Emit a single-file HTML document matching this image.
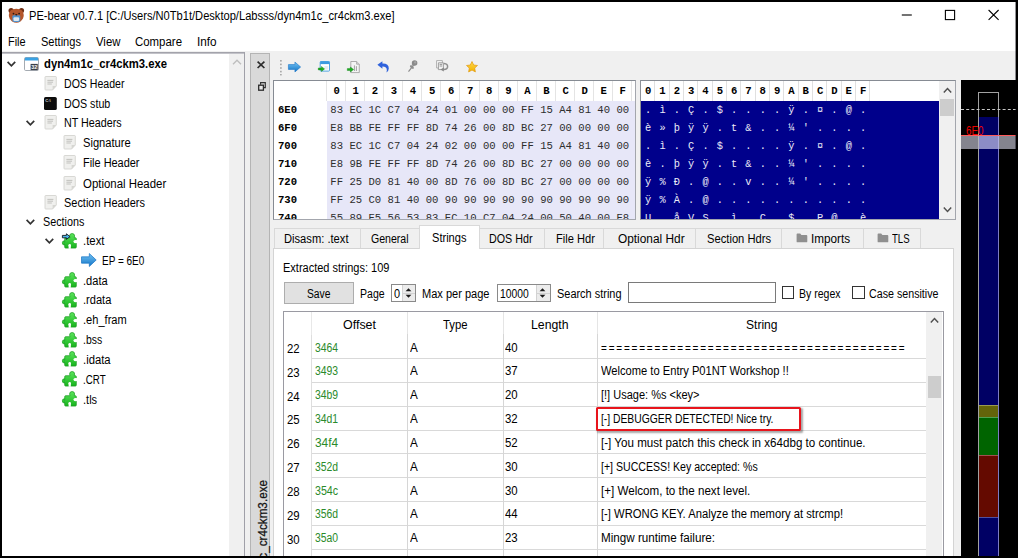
<!DOCTYPE html>
<html lang="en"><head><meta charset="utf-8"><title>PE-bear v0.7.1</title>
<style>
html,body{margin:0;padding:0}
body{width:1018px;height:558px;background:#000;overflow:hidden;position:relative;font:12px/16px "Liberation Sans", sans-serif;color:#000}
#win{position:absolute;left:2px;top:2px;width:1013.5px;height:553.6px;background:#f0f0f0;overflow:hidden}
#o{position:absolute;left:-2px;top:-2px;width:1018px;height:558px}
.b{position:absolute;box-sizing:border-box}
.t{position:absolute;white-space:pre;line-height:16px;height:16px;transform-origin:0 50%;color:#000}
.m{position:absolute;white-space:pre;font-family:"Liberation Mono", monospace;font-size:10.6px;line-height:14px;height:14px;text-align:center}
.hb{font-weight:bold;color:#000}
.hx{color:#2e2e2e}
.as{color:#ececf8;font-size:10.3px}
svg{position:absolute;overflow:visible}
</style></head><body><div id="win"><div id="o">
<div class="b" style="left:2px;top:2px;width:1014px;height:49px;background:#fff"></div>
<!-- ===== left tree dock ===== -->
<div class="b" style="left:2px;top:52px;width:243px;height:506px;background:#fff;border-top:1px solid #a3a3ab;border-right:1px solid #a0a0a8"></div>
<div class="b" style="left:2px;top:53px;width:242px;height:1px;background:#c2c2c8"></div>
<div class="b" style="left:229px;top:54px;width:15px;height:504px;background:#f0f0f0"></div>
<svg style="left:232px;top:58px" width="10" height="8" viewBox="0 0 10 8"><path d="M1 6.3 L5 2.2 L9 6.3" fill="none" stroke="#bdbdbd" stroke-width="1.3"/></svg>

<!-- ===== vertical dock title bar ===== -->
<div class="b" style="left:250.1px;top:52.6px;width:19.6px;height:506px;background:#d9d9d9;border:1px solid #b4b4b4;border-bottom:none"></div>
<svg style="left:256.6px;top:61px" width="8" height="8" viewBox="0 0 8 8"><path d="M0.6 0.6 L7.4 7.0 M7.4 0.6 L0.6 7.0" fill="none" stroke="#2b2b2b" stroke-width="1.7"/></svg>
<svg style="left:257.6px;top:81.6px" width="8" height="9" viewBox="0 0 8 9"><path d="M2.6 2.8 V0.7 H7.3 V5.6 H5.4" fill="none" stroke="#333" stroke-width="1.2"/><rect x="0.7" y="3.2" width="4.7" height="5" fill="#e8e8e8" stroke="#2b2b2b" stroke-width="1.3"/></svg>
<div class="t" style="left:254.6px;top:675.2px;width:200px;text-align:right;transform-origin:0 0;transform:rotate(-90deg) scaleX(0.975);font-size:12px;color:#111;-webkit-text-stroke:0.25px #111">dyn4m1c_cr4ckm3.exe</div>

<!-- ===== toolbar handle ===== -->
<svg style="left:279px;top:58.5px" width="4" height="17" viewBox="0 0 4 17"><g fill="#9a9a9a"><rect x="1.2" y="1" width="1.4" height="1.6"/><rect x="1.2" y="4.6" width="1.4" height="1.6"/><rect x="1.2" y="8.2" width="1.4" height="1.6"/><rect x="1.2" y="11.8" width="1.4" height="1.6"/><rect x="1.2" y="15" width="1.4" height="1.4"/></g></svg>

<!-- ===== hex view frame ===== -->
<div class="b" style="left:273px;top:80px;width:363px;height:140.4px;background:#fff;border:1px solid #a3a6ad;border-top-color:#868b93;border-left-color:#868b93"></div>
<div class="b" style="left:326.6px;top:101px;width:308.4px;height:118.4px;background:#e7e7f8"></div>
<!-- header grid lines (hex) -->
<div class="b" style="left:325.9px;top:81px;width:307.6px;height:20px;background:repeating-linear-gradient(90deg,#e4e4e4 0,#e4e4e4 1px,transparent 1px,transparent 19.07px)"></div>

<!-- ===== ascii view frame ===== -->
<div class="b" style="left:640px;top:80px;width:316px;height:140.4px;background:#fff;border:1px solid #a3a6ad;border-top-color:#868b93;border-left-color:#8e9299"></div>
<div class="b" style="left:641px;top:101px;width:298px;height:118.4px;background:#00008b"></div>
<div class="b" style="left:641.4px;top:81px;width:230px;height:20px;background:repeating-linear-gradient(90deg,transparent 0,transparent 13.33px,#e0e0e0 13.33px,#e0e0e0 14.33px)"></div>
<!-- ascii scrollbar -->
<div class="b" style="left:939px;top:81.2px;width:16.2px;height:138.2px;background:#f0f0f0"></div>
<div class="b" style="left:940.2px;top:99.2px;width:14px;height:16.8px;background:#cdcdcd"></div>
<svg style="left:942.6px;top:86.6px" width="9" height="7" viewBox="0 0 9 7"><path d="M0.8 5.4 L4.5 1.6 L8.2 5.4" fill="none" stroke="#505050" stroke-width="1.5"/></svg>
<svg style="left:942.6px;top:206.4px" width="9" height="7" viewBox="0 0 9 7"><path d="M0.8 1.6 L4.5 5.4 L8.2 1.6" fill="none" stroke="#505050" stroke-width="1.5"/></svg>

<!-- ===== tab widget ===== -->
<div class="b" style="left:273.4px;top:248px;width:680.4px;height:312px;background:#fff;border:1px solid #d4d4d4"></div>
<!-- unselected tabs -->
<div class="b" style="left:274.4px;top:227.8px;width:86.2px;height:21px;background:#f0f0f0;border:1px solid #d9d9d9;border-bottom:none"></div>
<div class="b" style="left:359.6px;top:227.8px;width:61px;height:21px;background:#f0f0f0;border:1px solid #d9d9d9;border-bottom:none"></div>
<div class="b" style="left:478.4px;top:227.8px;width:67px;height:21px;background:#f0f0f0;border:1px solid #d9d9d9;border-bottom:none"></div>
<div class="b" style="left:544.4px;top:227.8px;width:60px;height:21px;background:#f0f0f0;border:1px solid #d9d9d9;border-bottom:none"></div>
<div class="b" style="left:603.4px;top:227.8px;width:92.4px;height:21px;background:#f0f0f0;border:1px solid #d9d9d9;border-bottom:none"></div>
<div class="b" style="left:694.8px;top:227.8px;width:87.6px;height:21px;background:#f0f0f0;border:1px solid #d9d9d9;border-bottom:none"></div>
<div class="b" style="left:781.4px;top:227.8px;width:82.4px;height:21px;background:#f0f0f0;border:1px solid #d9d9d9;border-bottom:none"></div>
<div class="b" style="left:862.8px;top:227.8px;width:58.2px;height:21px;background:#f0f0f0;border:1px solid #d9d9d9;border-bottom:none"></div>
<div class="b" style="left:273.4px;top:248px;width:680.4px;height:1px;background:#d4d4d4"></div>
<!-- selected tab -->
<div class="b" style="left:419.4px;top:225.4px;width:60.4px;height:24px;background:#fff;border:1px solid #d9d9d9;border-bottom:none"></div>
<!-- folder icons in tabs -->
<svg style="left:796px;top:233.4px" width="12" height="10" viewBox="0 0 12 10"><path d="M0.6 1.4 Q0.6 0.6 1.4 0.6 H4.2 L5.4 2 H10.4 Q11.3 2 11.3 2.9 V8.4 Q11.3 9.3 10.4 9.3 H1.5 Q0.6 9.3 0.6 8.4 Z" fill="#8f8f8f"/></svg>
<svg style="left:877px;top:233.4px" width="12" height="10" viewBox="0 0 12 10"><path d="M0.6 1.4 Q0.6 0.6 1.4 0.6 H4.2 L5.4 2 H10.4 Q11.3 2 11.3 2.9 V8.4 Q11.3 9.3 10.4 9.3 H1.5 Q0.6 9.3 0.6 8.4 Z" fill="#8f8f8f"/></svg>

<!-- ===== strings controls ===== -->
<div class="b" style="left:284.4px;top:282.2px;width:69.4px;height:21.4px;background:#e1e1e1;border:1px solid #adadad"></div>
<div class="b" style="left:391.2px;top:284.2px;width:25.2px;height:17.4px;background:#fff;border:1px solid #8a8a8a"></div>
<div class="b" style="left:402.2px;top:285.2px;width:13.2px;height:15.4px;background:#ececec;border-left:1px solid #d2d2d2"></div>
<div class="b" style="left:403.2px;top:292.5px;width:12.2px;height:1px;background:#d2d2d2"></div>
<div class="b" style="left:496.8px;top:284.2px;width:54.6px;height:17.4px;background:#fff;border:1px solid #8a8a8a"></div>
<div class="b" style="left:536.2px;top:285.2px;width:14.2px;height:15.4px;background:#ececec;border-left:1px solid #d2d2d2"></div>
<div class="b" style="left:537.2px;top:292.5px;width:13.2px;height:1px;background:#d2d2d2"></div>
<div class="b" style="left:628px;top:282.4px;width:147.6px;height:20.6px;background:#fff;border:1px solid #7a7a7a"></div>
<div class="b" style="left:781.5px;top:286.1px;width:12.6px;height:12.6px;background:#fff;border:1px solid #333"></div>
<div class="b" style="left:852.4px;top:286.1px;width:12.6px;height:12.6px;background:#fff;border:1px solid #333"></div>
<!-- spin arrows -->
<svg style="left:405.4px;top:287px" width="7" height="12" viewBox="0 0 7 12"><path d="M0.6 4.2 L3.5 1.2 L6.4 4.2 Z M0.6 7.8 L3.5 10.8 L6.4 7.8 Z" fill="#1a1a1a"/></svg>
<svg style="left:539.4px;top:287px" width="7" height="12" viewBox="0 0 7 12"><path d="M0.6 4.2 L3.5 1.2 L6.4 4.2 Z M0.6 7.8 L3.5 10.8 L6.4 7.8 Z" fill="#1a1a1a"/></svg>

<!-- ===== strings table ===== -->
<div class="b" style="left:282.9px;top:310.8px;width:661px;height:250px;background:#fff;border:1.5px solid #9a9aa2"></div>
<!-- cell grid: horizontal lines -->
<div class="b" style="left:311px;top:358px;width:615px;height:1px;background:#d9d9d9"></div>
<div class="b" style="left:311px;top:382px;width:615px;height:1px;background:#d9d9d9"></div>
<div class="b" style="left:311px;top:406px;width:615px;height:1px;background:#d9d9d9"></div>
<div class="b" style="left:311px;top:430px;width:615px;height:1px;background:#d9d9d9"></div>
<div class="b" style="left:311px;top:453px;width:615px;height:1px;background:#d9d9d9"></div>
<div class="b" style="left:311px;top:477px;width:615px;height:1px;background:#d9d9d9"></div>
<div class="b" style="left:311px;top:501px;width:615px;height:1px;background:#d9d9d9"></div>
<div class="b" style="left:311px;top:525px;width:615px;height:1px;background:#d9d9d9"></div>
<div class="b" style="left:311px;top:549px;width:615px;height:1px;background:#d9d9d9"></div>
<!-- vertical lines -->
<div class="b" style="left:311px;top:335px;width:1px;height:224px;background:#dedede"></div>
<div class="b" style="left:407px;top:312.4px;width:1px;height:246px;background:linear-gradient(180deg,#e5e5e5 0,#e5e5e5 22px,#d6d6d6 22px)"></div>
<div class="b" style="left:502.6px;top:312.4px;width:1px;height:246px;background:linear-gradient(180deg,#e5e5e5 0,#e5e5e5 22px,#d6d6d6 22px)"></div>
<div class="b" style="left:597.2px;top:312.4px;width:1px;height:246px;background:linear-gradient(180deg,#e5e5e5 0,#e5e5e5 22px,#d6d6d6 22px)"></div>
<div class="b" style="left:311px;top:312.4px;width:1px;height:22.6px;background:#e8e8e8"></div>
<!-- table scrollbar -->
<div class="b" style="left:926.2px;top:312.4px;width:16.2px;height:246px;background:#f0f0f0"></div>
<div class="b" style="left:927.6px;top:376.4px;width:13.6px;height:21.6px;background:#cdcdcd"></div>
<svg style="left:930px;top:316.6px" width="9" height="7" viewBox="0 0 9 7"><path d="M0.8 5.4 L4.5 1.6 L8.2 5.4" fill="none" stroke="#505050" stroke-width="1.5"/></svg>

<!-- ===== minimap (right) ===== -->
<div class="b" style="left:961px;top:80.2px;width:58px;height:480px;background:#000"></div>
<div class="b" style="left:977.8px;top:92.2px;width:20.8px;height:470px;border:1px solid #a2a2a2;border-right-color:#7c7cc4;border-bottom:none"></div>
<div class="b" style="left:997.6px;top:92.2px;width:1px;height:25px;background:#a2a2a2"></div>
<div class="b" style="left:978.8px;top:117.2px;width:18.8px;height:288px;background:#000064"></div>
<div class="b" style="left:978.8px;top:405.2px;width:18.8px;height:12.2px;background:#64640a;border-top:1px solid #9a9a50"></div>
<div class="b" style="left:978.8px;top:417.4px;width:18.8px;height:37.8px;background:#006400;border-top:1px solid #50a050"></div>
<div class="b" style="left:978.8px;top:455.2px;width:18.8px;height:62.2px;background:#640a00;border-top:1px solid #a05050"></div>
<div class="b" style="left:978.8px;top:517.4px;width:18.8px;height:42px;background:#000064;border-top:1px solid #5050a0"></div>
<div class="b" style="left:961px;top:109.2px;width:55px;height:0;border-top:1px dashed #c8c8c8"></div>
<div class="b" style="left:961px;top:135.6px;width:55px;height:13px;background:#84848e"></div>
<div class="b" style="left:978.8px;top:135.6px;width:18.8px;height:13px;background:#8c8cc6"></div>
<div class="b" style="left:977.8px;top:135.6px;width:1px;height:13px;background:#b4b4bc"></div>
<div class="b" style="left:997.6px;top:135.6px;width:1px;height:13px;background:#b0b0e0"></div>
<div class="b" style="left:961px;top:134.8px;width:55px;height:1.2px;background:#ff5a5a"></div>
<span class="t" style="left:965.6px;top:122.6px;font-size:12px;color:#f00000;transform:scaleX(0.82)">6E0</span>
<svg width="0" height="0" style="left:0;top:0"><defs>
<linearGradient id="gb" x1="0" y1="0" x2="0" y2="1"><stop offset="0" stop-color="#74c4f4"/><stop offset="1" stop-color="#1274c6"/></linearGradient>
<linearGradient id="gg" gradientUnits="userSpaceOnUse" x1="0" y1="0" x2="0" y2="16"><stop offset="0" stop-color="#5ee65e"/><stop offset="1" stop-color="#14b01a"/></linearGradient>
<linearGradient id="gy" x1="0" y1="0" x2="0" y2="1"><stop offset="0" stop-color="#ffd84a"/><stop offset="1" stop-color="#f2b200"/></linearGradient>
<g id="chev"><path d="M0.6 0.9 L4.4 4.8 L8.2 0.9" fill="none" stroke="#333" stroke-width="1.7"/></g>
<g id="doc"><path d="M1 1.2 Q1 0.5 1.7 0.5 H11.6 Q12.3 0.5 12.3 1.2 V10 L8.6 14 H1.7 Q1 14 1 13.3 Z" fill="#f0f0ee" stroke="#cfcfcb" stroke-width=".8"/><path d="M8.6 14 V10.6 Q8.6 10 9.2 10 H12.3 Z" fill="#d6d6d2"/><path d="M3.4 4.4 H9.4 M3.4 6.2 H9 M3.4 8 H7.8" stroke="#bcbcb8" stroke-width=".9"/></g>
<g id="puz"><g fill="url(#gg)" stroke="#189a1e" stroke-width=".7"><circle cx="10.1" cy="3" r="2.5"/><circle cx="2.4" cy="9.9" r="2.1"/><rect x="2.7" y="4.7" width="11.6" height="10.4" rx="1"/></g><rect x="8.3" y="3.4" width="3.6" height="2.4" fill="#4ad84c"/><rect x="2.4" y="8.5" width="1.6" height="2.8" fill="#2fc436"/><circle cx="13.2" cy="8.6" r="1.7" fill="#fff"/><rect x="13.2" y="7.1" width="2" height="3" fill="#fff"/><circle cx="7.7" cy="12.4" r="1.3" fill="#fff"/><rect x="6.6" y="12.4" width="2.2" height="3.4" fill="#fff"/></g>
<g id="arr"><path d="M0.5 3.4 H8 V0.5 L14.6 6.2 L8 11.9 V9 H0.5 Z" fill="url(#gb)" stroke="#1f78c8" stroke-width=".7" stroke-linejoin="round"/></g>
<g id="garr"><path d="M0.3 1.6 H3.4 V0 L6.6 2.5 L3.4 5 V3.5 H0.3 Z" fill="#1fae22" stroke="#0f7f14" stroke-width=".4"/></g>
</defs></svg>

<!-- ===== title bar ===== -->
<svg style="left:7.8px;top:6.6px" width="16.6" height="16.8" viewBox="0 0 16 16">
<circle cx="3" cy="3.3" r="2.5" fill="#6e2e14"/><circle cx="13" cy="3.3" r="2.5" fill="#6e2e14"/>
<path d="M8 1.6 Q14.8 1.6 15.2 7.6 Q15.2 11.2 12 13.8 Q8 16.6 4 13.8 Q0.8 11.2 0.8 7.6 Q1.2 1.6 8 1.6 Z" fill="#b4562b"/>
<path d="M4.2 9 Q4.2 7.8 5.4 7.8 H10.6 Q11.8 7.8 11.8 9 V12.6 Q11.8 14.4 8 14.4 Q4.2 14.4 4.2 12.6 Z" fill="#4f93cf"/>
<rect x="5.3" y="9.8" width="5.4" height="3.6" rx="1" fill="#dfe7ee"/>
<circle cx="5.3" cy="6.2" r=".85" fill="#2a1a14"/><circle cx="10.7" cy="6.2" r=".85" fill="#2a1a14"/>
<ellipse cx="8" cy="7.4" rx="1.1" ry=".7" fill="#2a1a14"/>
</svg>
<svg style="left:901px;top:9px" width="100" height="12" viewBox="0 0 100 12">
<path d="M0.8 6 H10.8" stroke="#000" stroke-width="1.1" fill="none"/>
<rect x="44.4" y="1.4" width="9.2" height="9.2" fill="none" stroke="#000" stroke-width="1.1"/>
<path d="M87.6 1 L97.6 10.8 M97.6 1 L87.6 10.8" stroke="#000" stroke-width="1.1" fill="none"/>
</svg>

<!-- ===== tree: chevrons ===== -->
<svg style="left:6.6px;top:60.5px" width="9" height="6"><use href="#chev"/></svg>
<svg style="left:26.2px;top:119.9px" width="9" height="6"><use href="#chev"/></svg>
<svg style="left:25.8px;top:218.8px" width="9" height="6"><use href="#chev"/></svg>
<svg style="left:44.6px;top:237.7px" width="9" height="6"><use href="#chev"/></svg>
<!-- exe -->
<svg style="left:24px;top:56.6px" width="15" height="14" viewBox="0 0 15 14"><rect x=".5" y=".5" width="14" height="13" rx="1.2" fill="#fff" stroke="#9aa0a8" stroke-width=".9"/><path d="M.9 1.6 Q.9 .6 1.9 .6 H13.1 Q14.1 .6 14.1 1.6 V3.4 H.9 Z" fill="#3aa2e4"/><rect x="6.6" y="6.9" width="7.2" height="6.2" fill="#3a3f48"/><text x="10.2" y="12" font-family="Liberation Sans, sans-serif" font-size="5.4" font-weight="bold" fill="#fff" text-anchor="middle">32</text></svg>
<!-- doc icons -->
<svg style="left:43.8px;top:76.0px" width="14" height="15"><use href="#doc"/></svg>
<svg style="left:43.8px;top:115.3px" width="14" height="15"><use href="#doc"/></svg>
<svg style="left:62.5px;top:135.4px" width="14" height="15"><use href="#doc"/></svg>
<svg style="left:62.5px;top:155.4px" width="14" height="15"><use href="#doc"/></svg>
<svg style="left:62.5px;top:175.5px" width="14" height="15"><use href="#doc"/></svg>
<svg style="left:43.8px;top:195.3px" width="14" height="15"><use href="#doc"/></svg>
<!-- dos stub -->
<svg style="left:44.4px;top:96.7px" width="13" height="13" viewBox="0 0 13 13"><rect x="0" y="0" width="12.8" height="13" rx="1.6" fill="#0c0c0c"/><text x="1.2" y="5.2" font-family="Liberation Sans, sans-serif" font-size="4.2" font-weight="bold" fill="#d8d8d8">C:\</text></svg>
<!-- puzzles -->
<svg style="left:61.8px;top:232.5px" width="16" height="16"><use href="#puz"/><path d="M0.4 2.4 H4.4 V0.8 L8 3.6 L4.4 6.4 V4.8 H0.4 Z" fill="#49b4ea" stroke="#101820" stroke-width=".9"/></svg>
<svg style="left:61.8px;top:271.8px" width="16" height="16"><use href="#puz"/></svg>
<svg style="left:61.8px;top:291.6px" width="16" height="16"><use href="#puz"/></svg>
<svg style="left:61.8px;top:311.8px" width="16" height="16"><use href="#puz"/></svg>
<svg style="left:61.8px;top:331.6px" width="16" height="16"><use href="#puz"/></svg>
<svg style="left:61.8px;top:351.4px" width="16" height="16"><use href="#puz"/></svg>
<svg style="left:61.8px;top:371.0px" width="16" height="16"><use href="#puz"/></svg>
<svg style="left:61.8px;top:390.8px" width="16" height="16"><use href="#puz"/></svg>
<!-- EP arrow -->
<svg style="left:80.9px;top:253.2px" width="15.6" height="14" viewBox="0 0 15 12.4" preserveAspectRatio="none"><use href="#arr"/></svg>

<!-- ===== toolbar icons ===== -->
<svg style="left:287.6px;top:60.6px" width="13" height="12" viewBox="0 0 15 12.4"><use href="#arr"/></svg>
<!-- window + green arrow -->
<svg style="left:317.6px;top:61.2px" width="12" height="11" viewBox="0 0 12 11">
<rect x="2.2" y=".5" width="9.3" height="9.6" rx=".8" fill="#fff" stroke="#3d9be0" stroke-width=".9"/>
<rect x="2.2" y=".5" width="9.3" height="2.6" fill="#3d9be0"/>
<rect x="6.4" y="5" width="3.8" height="3.6" fill="#e6ecf2"/>
<g transform="translate(0,5.4)"><use href="#garr"/></g>
</svg>
<!-- file + green arrow -->
<svg style="left:346.8px;top:60.6px" width="13" height="12" viewBox="0 0 13 12">
<path d="M3.8 .5 H9.6 L12.3 3.2 V11.6 H3.8 Z" fill="#f4f4f4" stroke="#9a9a9a" stroke-width=".8"/>
<path d="M9.6 .5 V3.2 H12.3" fill="#d8d8d8" stroke="#9a9a9a" stroke-width=".7"/>
<path d="M7.4 4.4 V10 M9.4 5.2 V10" stroke="#8a8a8a" stroke-width=".8"/>
<g transform="translate(0,6)"><use href="#garr"/></g>
</svg>
<!-- undo -->
<svg style="left:376.6px;top:60.6px" width="13" height="12" viewBox="0 0 13 12">
<path d="M0.4 3.8 L5.4 0.2 V2.4 Q11.8 2.2 11.8 7.4 Q11.6 10.2 9.4 11.6 Q10.2 9.4 9.6 7.6 Q8.6 5.4 5.4 5.6 V7.8 Z" fill="#2f62dc"/>
</svg>
<!-- pin -->
<svg style="left:407.8px;top:60.2px" width="10" height="12" viewBox="0 0 10 12">
<path d="M0.5 11.6 L3.6 7.6" stroke="#8a8a8a" stroke-width="1.1" fill="none"/>
<path d="M2 5.6 Q3.4 4.6 5 6 Q6.4 7.4 5.6 8.8 Q4.2 9.2 2.8 7.8 Q1.4 6.4 2 5.6 Z" fill="#8e8e8e"/>
<path d="M3.6 5 L5.2 3.2 L7 5 L5.4 6.6 Z" fill="#9c9c9c"/>
<circle cx="6.6" cy="3" r="2.8" fill="#8a8a8a"/><circle cx="7.2" cy="2.4" r="1.1" fill="#a6a6a6"/>
</svg>
<!-- pages -->
<svg style="left:436px;top:60.2px" width="13" height="12" viewBox="0 0 13 12">
<path d="M.6 .6 H6.4 V8 H.6 Z" fill="#fafafa" stroke="#a8a8a8" stroke-width=".9"/>
<path d="M2.4 2.8 H7.4 V9.6 H2.4 Z" fill="#f2f2f2" stroke="#969696" stroke-width=".9"/>
<path d="M3.6 4.4 H6.2 M3.6 6 H6.2" stroke="#8a8a8a" stroke-width=".9"/>
<path d="M8 3.4 Q12 3.6 11.6 7.2 Q11 9.8 7.6 9.6" fill="none" stroke="#8e8e8e" stroke-width="1.5"/>
<path d="M4.4 9.6 L7.8 7.6 V11.6 Z" fill="#868686"/>
</svg>
<!-- star -->
<svg style="left:465.6px;top:61.2px" width="12" height="11.4" viewBox="0 0 12 11.4">
<path d="M6 .5 L7.7 4 L11.5 4.5 L8.7 7.1 L9.4 10.9 L6 9.1 L2.6 10.9 L3.3 7.1 L.5 4.5 L4.3 4 Z" fill="url(#gy)" stroke="#e39a10" stroke-width=".7" stroke-linejoin="round"/>
</svg>
<div class="b" style="left:0;top:0;width:1018px;height:219.2px;overflow:hidden">
<div id="hex">
<span class="m hb" style="left:327.20px;top:84px;width:19.07px">0</span><span class="m hb" style="left:346.27px;top:84px;width:19.07px">1</span><span class="m hb" style="left:365.34px;top:84px;width:19.07px">2</span><span class="m hb" style="left:384.41px;top:84px;width:19.07px">3</span><span class="m hb" style="left:403.48px;top:84px;width:19.07px">4</span><span class="m hb" style="left:422.55px;top:84px;width:19.07px">5</span><span class="m hb" style="left:441.62px;top:84px;width:19.07px">6</span><span class="m hb" style="left:460.69px;top:84px;width:19.07px">7</span><span class="m hb" style="left:479.76px;top:84px;width:19.07px">8</span><span class="m hb" style="left:498.83px;top:84px;width:19.07px">9</span><span class="m hb" style="left:517.90px;top:84px;width:19.07px">A</span><span class="m hb" style="left:536.97px;top:84px;width:19.07px">B</span><span class="m hb" style="left:556.04px;top:84px;width:19.07px">C</span><span class="m hb" style="left:575.11px;top:84px;width:19.07px">D</span><span class="m hb" style="left:594.18px;top:84px;width:19.07px">E</span><span class="m hb" style="left:613.25px;top:84px;width:19.07px">F</span>
<span class="m hb" style="left:278px;top:103.4px;text-align:left">6E0</span><span class="m hx" style="left:327.20px;top:103.4px;width:19.07px">83</span><span class="m hx" style="left:346.27px;top:103.4px;width:19.07px">EC</span><span class="m hx" style="left:365.34px;top:103.4px;width:19.07px">1C</span><span class="m hx" style="left:384.41px;top:103.4px;width:19.07px">C7</span><span class="m hx" style="left:403.48px;top:103.4px;width:19.07px">04</span><span class="m hx" style="left:422.55px;top:103.4px;width:19.07px">24</span><span class="m hx" style="left:441.62px;top:103.4px;width:19.07px">01</span><span class="m hx" style="left:460.69px;top:103.4px;width:19.07px">00</span><span class="m hx" style="left:479.76px;top:103.4px;width:19.07px">00</span><span class="m hx" style="left:498.83px;top:103.4px;width:19.07px">00</span><span class="m hx" style="left:517.90px;top:103.4px;width:19.07px">FF</span><span class="m hx" style="left:536.97px;top:103.4px;width:19.07px">15</span><span class="m hx" style="left:556.04px;top:103.4px;width:19.07px">A4</span><span class="m hx" style="left:575.11px;top:103.4px;width:19.07px">81</span><span class="m hx" style="left:594.18px;top:103.4px;width:19.07px">40</span><span class="m hx" style="left:613.25px;top:103.4px;width:19.07px">00</span>
<span class="m hb" style="left:278px;top:121.3px;text-align:left">6F0</span><span class="m hx" style="left:327.20px;top:121.3px;width:19.07px">E8</span><span class="m hx" style="left:346.27px;top:121.3px;width:19.07px">BB</span><span class="m hx" style="left:365.34px;top:121.3px;width:19.07px">FE</span><span class="m hx" style="left:384.41px;top:121.3px;width:19.07px">FF</span><span class="m hx" style="left:403.48px;top:121.3px;width:19.07px">FF</span><span class="m hx" style="left:422.55px;top:121.3px;width:19.07px">8D</span><span class="m hx" style="left:441.62px;top:121.3px;width:19.07px">74</span><span class="m hx" style="left:460.69px;top:121.3px;width:19.07px">26</span><span class="m hx" style="left:479.76px;top:121.3px;width:19.07px">00</span><span class="m hx" style="left:498.83px;top:121.3px;width:19.07px">8D</span><span class="m hx" style="left:517.90px;top:121.3px;width:19.07px">BC</span><span class="m hx" style="left:536.97px;top:121.3px;width:19.07px">27</span><span class="m hx" style="left:556.04px;top:121.3px;width:19.07px">00</span><span class="m hx" style="left:575.11px;top:121.3px;width:19.07px">00</span><span class="m hx" style="left:594.18px;top:121.3px;width:19.07px">00</span><span class="m hx" style="left:613.25px;top:121.3px;width:19.07px">00</span>
<span class="m hb" style="left:278px;top:139.1px;text-align:left">700</span><span class="m hx" style="left:327.20px;top:139.1px;width:19.07px">83</span><span class="m hx" style="left:346.27px;top:139.1px;width:19.07px">EC</span><span class="m hx" style="left:365.34px;top:139.1px;width:19.07px">1C</span><span class="m hx" style="left:384.41px;top:139.1px;width:19.07px">C7</span><span class="m hx" style="left:403.48px;top:139.1px;width:19.07px">04</span><span class="m hx" style="left:422.55px;top:139.1px;width:19.07px">24</span><span class="m hx" style="left:441.62px;top:139.1px;width:19.07px">02</span><span class="m hx" style="left:460.69px;top:139.1px;width:19.07px">00</span><span class="m hx" style="left:479.76px;top:139.1px;width:19.07px">00</span><span class="m hx" style="left:498.83px;top:139.1px;width:19.07px">00</span><span class="m hx" style="left:517.90px;top:139.1px;width:19.07px">FF</span><span class="m hx" style="left:536.97px;top:139.1px;width:19.07px">15</span><span class="m hx" style="left:556.04px;top:139.1px;width:19.07px">A4</span><span class="m hx" style="left:575.11px;top:139.1px;width:19.07px">81</span><span class="m hx" style="left:594.18px;top:139.1px;width:19.07px">40</span><span class="m hx" style="left:613.25px;top:139.1px;width:19.07px">00</span>
<span class="m hb" style="left:278px;top:157.0px;text-align:left">710</span><span class="m hx" style="left:327.20px;top:157.0px;width:19.07px">E8</span><span class="m hx" style="left:346.27px;top:157.0px;width:19.07px">9B</span><span class="m hx" style="left:365.34px;top:157.0px;width:19.07px">FE</span><span class="m hx" style="left:384.41px;top:157.0px;width:19.07px">FF</span><span class="m hx" style="left:403.48px;top:157.0px;width:19.07px">FF</span><span class="m hx" style="left:422.55px;top:157.0px;width:19.07px">8D</span><span class="m hx" style="left:441.62px;top:157.0px;width:19.07px">74</span><span class="m hx" style="left:460.69px;top:157.0px;width:19.07px">26</span><span class="m hx" style="left:479.76px;top:157.0px;width:19.07px">00</span><span class="m hx" style="left:498.83px;top:157.0px;width:19.07px">8D</span><span class="m hx" style="left:517.90px;top:157.0px;width:19.07px">BC</span><span class="m hx" style="left:536.97px;top:157.0px;width:19.07px">27</span><span class="m hx" style="left:556.04px;top:157.0px;width:19.07px">00</span><span class="m hx" style="left:575.11px;top:157.0px;width:19.07px">00</span><span class="m hx" style="left:594.18px;top:157.0px;width:19.07px">00</span><span class="m hx" style="left:613.25px;top:157.0px;width:19.07px">00</span>
<span class="m hb" style="left:278px;top:174.9px;text-align:left">720</span><span class="m hx" style="left:327.20px;top:174.9px;width:19.07px">FF</span><span class="m hx" style="left:346.27px;top:174.9px;width:19.07px">25</span><span class="m hx" style="left:365.34px;top:174.9px;width:19.07px">D0</span><span class="m hx" style="left:384.41px;top:174.9px;width:19.07px">81</span><span class="m hx" style="left:403.48px;top:174.9px;width:19.07px">40</span><span class="m hx" style="left:422.55px;top:174.9px;width:19.07px">00</span><span class="m hx" style="left:441.62px;top:174.9px;width:19.07px">8D</span><span class="m hx" style="left:460.69px;top:174.9px;width:19.07px">76</span><span class="m hx" style="left:479.76px;top:174.9px;width:19.07px">00</span><span class="m hx" style="left:498.83px;top:174.9px;width:19.07px">8D</span><span class="m hx" style="left:517.90px;top:174.9px;width:19.07px">BC</span><span class="m hx" style="left:536.97px;top:174.9px;width:19.07px">27</span><span class="m hx" style="left:556.04px;top:174.9px;width:19.07px">00</span><span class="m hx" style="left:575.11px;top:174.9px;width:19.07px">00</span><span class="m hx" style="left:594.18px;top:174.9px;width:19.07px">00</span><span class="m hx" style="left:613.25px;top:174.9px;width:19.07px">00</span>
<span class="m hb" style="left:278px;top:192.8px;text-align:left">730</span><span class="m hx" style="left:327.20px;top:192.8px;width:19.07px">FF</span><span class="m hx" style="left:346.27px;top:192.8px;width:19.07px">25</span><span class="m hx" style="left:365.34px;top:192.8px;width:19.07px">C0</span><span class="m hx" style="left:384.41px;top:192.8px;width:19.07px">81</span><span class="m hx" style="left:403.48px;top:192.8px;width:19.07px">40</span><span class="m hx" style="left:422.55px;top:192.8px;width:19.07px">00</span><span class="m hx" style="left:441.62px;top:192.8px;width:19.07px">90</span><span class="m hx" style="left:460.69px;top:192.8px;width:19.07px">90</span><span class="m hx" style="left:479.76px;top:192.8px;width:19.07px">90</span><span class="m hx" style="left:498.83px;top:192.8px;width:19.07px">90</span><span class="m hx" style="left:517.90px;top:192.8px;width:19.07px">90</span><span class="m hx" style="left:536.97px;top:192.8px;width:19.07px">90</span><span class="m hx" style="left:556.04px;top:192.8px;width:19.07px">90</span><span class="m hx" style="left:575.11px;top:192.8px;width:19.07px">90</span><span class="m hx" style="left:594.18px;top:192.8px;width:19.07px">90</span><span class="m hx" style="left:613.25px;top:192.8px;width:19.07px">90</span>
<span class="m hb" style="left:278px;top:210.6px;text-align:left">740</span><span class="m hx" style="left:327.20px;top:210.6px;width:19.07px">55</span><span class="m hx" style="left:346.27px;top:210.6px;width:19.07px">89</span><span class="m hx" style="left:365.34px;top:210.6px;width:19.07px">E5</span><span class="m hx" style="left:384.41px;top:210.6px;width:19.07px">56</span><span class="m hx" style="left:403.48px;top:210.6px;width:19.07px">53</span><span class="m hx" style="left:422.55px;top:210.6px;width:19.07px">83</span><span class="m hx" style="left:441.62px;top:210.6px;width:19.07px">EC</span><span class="m hx" style="left:460.69px;top:210.6px;width:19.07px">10</span><span class="m hx" style="left:479.76px;top:210.6px;width:19.07px">C7</span><span class="m hx" style="left:498.83px;top:210.6px;width:19.07px">04</span><span class="m hx" style="left:517.90px;top:210.6px;width:19.07px">24</span><span class="m hx" style="left:536.97px;top:210.6px;width:19.07px">00</span><span class="m hx" style="left:556.04px;top:210.6px;width:19.07px">50</span><span class="m hx" style="left:575.11px;top:210.6px;width:19.07px">40</span><span class="m hx" style="left:594.18px;top:210.6px;width:19.07px">00</span><span class="m hx" style="left:613.25px;top:210.6px;width:19.07px">E8</span>
</div>
<div id="ascii">
<span class="m hb" style="left:641.00px;top:84px;width:14.33px">0</span><span class="m hb" style="left:655.33px;top:84px;width:14.33px">1</span><span class="m hb" style="left:669.66px;top:84px;width:14.33px">2</span><span class="m hb" style="left:683.99px;top:84px;width:14.33px">3</span><span class="m hb" style="left:698.32px;top:84px;width:14.33px">4</span><span class="m hb" style="left:712.65px;top:84px;width:14.33px">5</span><span class="m hb" style="left:726.98px;top:84px;width:14.33px">6</span><span class="m hb" style="left:741.31px;top:84px;width:14.33px">7</span><span class="m hb" style="left:755.64px;top:84px;width:14.33px">8</span><span class="m hb" style="left:769.97px;top:84px;width:14.33px">9</span><span class="m hb" style="left:784.30px;top:84px;width:14.33px">A</span><span class="m hb" style="left:798.63px;top:84px;width:14.33px">B</span><span class="m hb" style="left:812.96px;top:84px;width:14.33px">C</span><span class="m hb" style="left:827.29px;top:84px;width:14.33px">D</span><span class="m hb" style="left:841.62px;top:84px;width:14.33px">E</span><span class="m hb" style="left:855.95px;top:84px;width:14.33px">F</span>
<span class="m as" style="left:641.00px;top:103.4px;width:14.33px">.</span><span class="m as" style="left:655.33px;top:103.4px;width:14.33px">ì</span><span class="m as" style="left:669.66px;top:103.4px;width:14.33px">.</span><span class="m as" style="left:683.99px;top:103.4px;width:14.33px">Ç</span><span class="m as" style="left:698.32px;top:103.4px;width:14.33px">.</span><span class="m as" style="left:712.65px;top:103.4px;width:14.33px">$</span><span class="m as" style="left:726.98px;top:103.4px;width:14.33px">.</span><span class="m as" style="left:741.31px;top:103.4px;width:14.33px">.</span><span class="m as" style="left:755.64px;top:103.4px;width:14.33px">.</span><span class="m as" style="left:769.97px;top:103.4px;width:14.33px">.</span><span class="m as" style="left:784.30px;top:103.4px;width:14.33px">ÿ</span><span class="m as" style="left:798.63px;top:103.4px;width:14.33px">.</span><span class="m as" style="left:812.96px;top:103.4px;width:14.33px">¤</span><span class="m as" style="left:827.29px;top:103.4px;width:14.33px">.</span><span class="m as" style="left:841.62px;top:103.4px;width:14.33px">@</span><span class="m as" style="left:855.95px;top:103.4px;width:14.33px">.</span>
<span class="m as" style="left:641.00px;top:121.3px;width:14.33px">è</span><span class="m as" style="left:655.33px;top:121.3px;width:14.33px">»</span><span class="m as" style="left:669.66px;top:121.3px;width:14.33px">þ</span><span class="m as" style="left:683.99px;top:121.3px;width:14.33px">ÿ</span><span class="m as" style="left:698.32px;top:121.3px;width:14.33px">ÿ</span><span class="m as" style="left:712.65px;top:121.3px;width:14.33px">.</span><span class="m as" style="left:726.98px;top:121.3px;width:14.33px">t</span><span class="m as" style="left:741.31px;top:121.3px;width:14.33px">&amp;</span><span class="m as" style="left:755.64px;top:121.3px;width:14.33px">.</span><span class="m as" style="left:769.97px;top:121.3px;width:14.33px">.</span><span class="m as" style="left:784.30px;top:121.3px;width:14.33px">¼</span><span class="m as" style="left:798.63px;top:121.3px;width:14.33px">&#x27;</span><span class="m as" style="left:812.96px;top:121.3px;width:14.33px">.</span><span class="m as" style="left:827.29px;top:121.3px;width:14.33px">.</span><span class="m as" style="left:841.62px;top:121.3px;width:14.33px">.</span><span class="m as" style="left:855.95px;top:121.3px;width:14.33px">.</span>
<span class="m as" style="left:641.00px;top:139.1px;width:14.33px">.</span><span class="m as" style="left:655.33px;top:139.1px;width:14.33px">ì</span><span class="m as" style="left:669.66px;top:139.1px;width:14.33px">.</span><span class="m as" style="left:683.99px;top:139.1px;width:14.33px">Ç</span><span class="m as" style="left:698.32px;top:139.1px;width:14.33px">.</span><span class="m as" style="left:712.65px;top:139.1px;width:14.33px">$</span><span class="m as" style="left:726.98px;top:139.1px;width:14.33px">.</span><span class="m as" style="left:741.31px;top:139.1px;width:14.33px">.</span><span class="m as" style="left:755.64px;top:139.1px;width:14.33px">.</span><span class="m as" style="left:769.97px;top:139.1px;width:14.33px">.</span><span class="m as" style="left:784.30px;top:139.1px;width:14.33px">ÿ</span><span class="m as" style="left:798.63px;top:139.1px;width:14.33px">.</span><span class="m as" style="left:812.96px;top:139.1px;width:14.33px">¤</span><span class="m as" style="left:827.29px;top:139.1px;width:14.33px">.</span><span class="m as" style="left:841.62px;top:139.1px;width:14.33px">@</span><span class="m as" style="left:855.95px;top:139.1px;width:14.33px">.</span>
<span class="m as" style="left:641.00px;top:157.0px;width:14.33px">è</span><span class="m as" style="left:655.33px;top:157.0px;width:14.33px">.</span><span class="m as" style="left:669.66px;top:157.0px;width:14.33px">þ</span><span class="m as" style="left:683.99px;top:157.0px;width:14.33px">ÿ</span><span class="m as" style="left:698.32px;top:157.0px;width:14.33px">ÿ</span><span class="m as" style="left:712.65px;top:157.0px;width:14.33px">.</span><span class="m as" style="left:726.98px;top:157.0px;width:14.33px">t</span><span class="m as" style="left:741.31px;top:157.0px;width:14.33px">&amp;</span><span class="m as" style="left:755.64px;top:157.0px;width:14.33px">.</span><span class="m as" style="left:769.97px;top:157.0px;width:14.33px">.</span><span class="m as" style="left:784.30px;top:157.0px;width:14.33px">¼</span><span class="m as" style="left:798.63px;top:157.0px;width:14.33px">&#x27;</span><span class="m as" style="left:812.96px;top:157.0px;width:14.33px">.</span><span class="m as" style="left:827.29px;top:157.0px;width:14.33px">.</span><span class="m as" style="left:841.62px;top:157.0px;width:14.33px">.</span><span class="m as" style="left:855.95px;top:157.0px;width:14.33px">.</span>
<span class="m as" style="left:641.00px;top:174.9px;width:14.33px">ÿ</span><span class="m as" style="left:655.33px;top:174.9px;width:14.33px">%</span><span class="m as" style="left:669.66px;top:174.9px;width:14.33px">Ð</span><span class="m as" style="left:683.99px;top:174.9px;width:14.33px">.</span><span class="m as" style="left:698.32px;top:174.9px;width:14.33px">@</span><span class="m as" style="left:712.65px;top:174.9px;width:14.33px">.</span><span class="m as" style="left:726.98px;top:174.9px;width:14.33px">.</span><span class="m as" style="left:741.31px;top:174.9px;width:14.33px">v</span><span class="m as" style="left:755.64px;top:174.9px;width:14.33px">.</span><span class="m as" style="left:769.97px;top:174.9px;width:14.33px">.</span><span class="m as" style="left:784.30px;top:174.9px;width:14.33px">¼</span><span class="m as" style="left:798.63px;top:174.9px;width:14.33px">&#x27;</span><span class="m as" style="left:812.96px;top:174.9px;width:14.33px">.</span><span class="m as" style="left:827.29px;top:174.9px;width:14.33px">.</span><span class="m as" style="left:841.62px;top:174.9px;width:14.33px">.</span><span class="m as" style="left:855.95px;top:174.9px;width:14.33px">.</span>
<span class="m as" style="left:641.00px;top:192.8px;width:14.33px">ÿ</span><span class="m as" style="left:655.33px;top:192.8px;width:14.33px">%</span><span class="m as" style="left:669.66px;top:192.8px;width:14.33px">À</span><span class="m as" style="left:683.99px;top:192.8px;width:14.33px">.</span><span class="m as" style="left:698.32px;top:192.8px;width:14.33px">@</span><span class="m as" style="left:712.65px;top:192.8px;width:14.33px">.</span><span class="m as" style="left:726.98px;top:192.8px;width:14.33px">.</span><span class="m as" style="left:741.31px;top:192.8px;width:14.33px">.</span><span class="m as" style="left:755.64px;top:192.8px;width:14.33px">.</span><span class="m as" style="left:769.97px;top:192.8px;width:14.33px">.</span><span class="m as" style="left:784.30px;top:192.8px;width:14.33px">.</span><span class="m as" style="left:798.63px;top:192.8px;width:14.33px">.</span><span class="m as" style="left:812.96px;top:192.8px;width:14.33px">.</span><span class="m as" style="left:827.29px;top:192.8px;width:14.33px">.</span><span class="m as" style="left:841.62px;top:192.8px;width:14.33px">.</span><span class="m as" style="left:855.95px;top:192.8px;width:14.33px">.</span>
<span class="m as" style="left:641.00px;top:210.6px;width:14.33px">U</span><span class="m as" style="left:655.33px;top:210.6px;width:14.33px">.</span><span class="m as" style="left:669.66px;top:210.6px;width:14.33px">å</span><span class="m as" style="left:683.99px;top:210.6px;width:14.33px">V</span><span class="m as" style="left:698.32px;top:210.6px;width:14.33px">S</span><span class="m as" style="left:712.65px;top:210.6px;width:14.33px">.</span><span class="m as" style="left:726.98px;top:210.6px;width:14.33px">ì</span><span class="m as" style="left:741.31px;top:210.6px;width:14.33px">.</span><span class="m as" style="left:755.64px;top:210.6px;width:14.33px">Ç</span><span class="m as" style="left:769.97px;top:210.6px;width:14.33px">.</span><span class="m as" style="left:784.30px;top:210.6px;width:14.33px">$</span><span class="m as" style="left:798.63px;top:210.6px;width:14.33px">.</span><span class="m as" style="left:812.96px;top:210.6px;width:14.33px">P</span><span class="m as" style="left:827.29px;top:210.6px;width:14.33px">@</span><span class="m as" style="left:841.62px;top:210.6px;width:14.33px">.</span><span class="m as" style="left:855.95px;top:210.6px;width:14.33px">è</span>
</div>
</div>
<!-- red annotation box on row 25 -->
<div class="b" style="left:595.6px;top:406.8px;width:205.4px;height:23.8px;border:2px solid #e8141c;border-radius:1.5px;box-shadow:1.5px 1.5px 2px rgba(0,0,0,0.35)"></div>
<!-- right-edge soft border --><div class="b" style="left:1015px;top:0;width:1px;height:558px;background:rgba(0,0,8,0.42)"></div>
<span class="t" id="t0" style="left:28.71px;top:8.20px;transform:scaleX(0.9259);">PE-bear v0.7.1 [C:/Users/N0Tb1t/Desktop/Labsss/dyn4m1c_cr4ckm3.exe]</span>
<span class="t" id="t1" style="left:8.12px;top:34.20px;transform:scaleX(0.9099);">File</span>
<span class="t" id="t2" style="left:40.71px;top:34.20px;transform:scaleX(0.9202);">Settings</span>
<span class="t" id="t3" style="left:95.89px;top:34.20px;transform:scaleX(0.9459);">View</span>
<span class="t" id="t4" style="left:134.79px;top:34.20px;transform:scaleX(0.9522);">Compare</span>
<span class="t" id="t5" style="left:197.07px;top:34.20px;transform:scaleX(0.9792);">Info</span>
<span class="t" id="t6" style="left:44.49px;top:55.94px;transform:scaleX(0.9406);font-weight:bold">dyn4m1c_cr4ckm3.exe</span>
<span class="t" id="t7" style="left:64.14px;top:76.04px;transform:scaleX(0.8806);">DOS Header</span>
<span class="t" id="t8" style="left:64.13px;top:96.04px;transform:scaleX(0.8898);">DOS stub</span>
<span class="t" id="t9" style="left:64.13px;top:115.34px;transform:scaleX(0.8932);">NT Headers</span>
<span class="t" id="t10" style="left:82.70px;top:135.44px;transform:scaleX(0.9285);">Signature</span>
<span class="t" id="t11" style="left:82.72px;top:155.44px;transform:scaleX(0.9108);">File Header</span>
<span class="t" id="t12" style="left:82.69px;top:175.54px;transform:scaleX(0.9520);">Optional Header</span>
<span class="t" id="t13" style="left:64.12px;top:195.34px;transform:scaleX(0.9119);">Section Headers</span>
<span class="t" id="t14" style="left:42.93px;top:214.24px;transform:scaleX(0.8994);">Sections</span>
<span class="t" id="t15" style="left:82.59px;top:233.14px;transform:scaleX(0.9477);">.text</span>
<span class="t" id="t16" style="left:101.88px;top:252.64px;transform:scaleX(0.8322);">EP = 6E0</span>
<span class="t" id="t17" style="left:82.61px;top:272.54px;transform:scaleX(0.9250);">.data</span>
<span class="t" id="t18" style="left:82.61px;top:292.34px;transform:scaleX(0.9222);">.rdata</span>
<span class="t" id="t19" style="left:82.61px;top:312.44px;transform:scaleX(0.9227);">.eh_fram</span>
<span class="t" id="t20" style="left:82.65px;top:332.34px;transform:scaleX(0.8676);">.bss</span>
<span class="t" id="t21" style="left:82.59px;top:352.14px;transform:scaleX(0.9401);">.idata</span>
<span class="t" id="t22" style="left:82.69px;top:371.74px;transform:scaleX(0.8135);">.CRT</span>
<span class="t" id="t23" style="left:82.61px;top:391.54px;transform:scaleX(0.9189);">.tls</span>
<span class="t" id="t24" style="left:283.70px;top:231.40px;transform:scaleX(0.9299);">Disasm: .text</span>
<span class="t" id="t25" style="left:371.44px;top:231.40px;transform:scaleX(0.8805);">General</span>
<span class="t" id="t26" style="left:431.91px;top:230.20px;transform:scaleX(0.9235);">Strings</span>
<span class="t" id="t27" style="left:489.33px;top:231.40px;transform:scaleX(0.8935);">DOS Hdr</span>
<span class="t" id="t28" style="left:555.70px;top:231.40px;transform:scaleX(0.9282);">File Hdr</span>
<span class="t" id="t29" style="left:617.66px;top:231.40px;transform:scaleX(0.9885);">Optional Hdr</span>
<span class="t" id="t30" style="left:706.70px;top:231.40px;transform:scaleX(0.9330);">Section Hdrs</span>
<span class="t" id="t31" style="left:810.97px;top:231.40px;transform:scaleX(0.9771);">Imports</span>
<span class="t" id="t32" style="left:892.20px;top:231.40px;transform:scaleX(0.7994);">TLS</span>
<span class="t" id="t33" style="left:283.01px;top:259.60px;transform:scaleX(0.9167);">Extracted strings: 109</span>
<span class="t" id="t34" style="left:307.16px;top:285.60px;transform:scaleX(0.8589);">Save</span>
<span class="t" id="t35" style="left:360.44px;top:285.60px;transform:scaleX(0.8776);">Page</span>
<span class="t" id="t36" style="left:393.92px;top:285.60px;transform:scaleX(0.9121);">0</span>
<span class="t" id="t37" style="left:422.31px;top:285.60px;transform:scaleX(0.9197);">Max per page</span>
<span class="t" id="t38" style="left:499.66px;top:285.60px;transform:scaleX(0.8599);">10000</span>
<span class="t" id="t39" style="left:557.32px;top:285.60px;transform:scaleX(0.9123);">Search string</span>
<span class="t" id="t40" style="left:799.04px;top:285.60px;transform:scaleX(0.8784);">By regex</span>
<span class="t" id="t41" style="left:869.33px;top:285.60px;transform:scaleX(0.8905);">Case sensitive</span>
<span class="t" id="t42" style="left:342.72px;top:316.60px;transform:scaleX(1.0378);">Offset</span>
<span class="t" id="t43" style="left:442.79px;top:316.60px;transform:scaleX(0.9417);">Type</span>
<span class="t" id="t44" style="left:530.73px;top:316.60px;transform:scaleX(1.0217);">Length</span>
<span class="t" id="t45" style="left:745.75px;top:316.60px;transform:scaleX(1.0045);">String</span>
<span class="t" id="t46" style="left:287.29px;top:340.90px;transform:scaleX(0.9506);">22</span>
<span class="t" id="t47" style="left:314.75px;top:339.50px;transform:scaleX(0.8651);color:#2a8a2a">3464</span>
<span class="t" id="t48" style="left:409.57px;top:339.50px;transform:scaleX(0.9731);">A</span>
<span class="t" id="t49" style="left:505.49px;top:339.50px;transform:scaleX(0.9506);">40</span>
<span class="t" id="t50" style="left:601.18px;top:339.50px;transform:scaleX(0.8289);letter-spacing:2.2px">========================================</span>
<span class="t" id="t51" style="left:287.29px;top:364.75px;transform:scaleX(0.9506);">23</span>
<span class="t" id="t52" style="left:314.75px;top:363.35px;transform:scaleX(0.8651);color:#2a8a2a">3493</span>
<span class="t" id="t53" style="left:409.57px;top:363.35px;transform:scaleX(0.9731);">A</span>
<span class="t" id="t54" style="left:505.49px;top:363.35px;transform:scaleX(0.9506);">37</span>
<span class="t" id="t55" style="left:601.10px;top:363.35px;transform:scaleX(0.9293);">Welcome to Entry P01NT Workshop !!</span>
<span class="t" id="t56" style="left:287.29px;top:388.60px;transform:scaleX(0.9506);">24</span>
<span class="t" id="t57" style="left:314.75px;top:387.20px;transform:scaleX(0.8651);color:#2a8a2a">34b9</span>
<span class="t" id="t58" style="left:409.57px;top:387.20px;transform:scaleX(0.9731);">A</span>
<span class="t" id="t59" style="left:505.49px;top:387.20px;transform:scaleX(0.9506);">20</span>
<span class="t" id="t60" style="left:601.11px;top:387.20px;transform:scaleX(0.9172);">[!] Usage: %s &lt;key&gt;</span>
<span class="t" id="t61" style="left:287.29px;top:412.45px;transform:scaleX(0.9506);">25</span>
<span class="t" id="t62" style="left:314.75px;top:411.05px;transform:scaleX(0.8651);color:#2a8a2a">34d1</span>
<span class="t" id="t63" style="left:409.57px;top:411.05px;transform:scaleX(0.9731);">A</span>
<span class="t" id="t64" style="left:505.49px;top:411.05px;transform:scaleX(0.9506);">32</span>
<span class="t" id="t65" style="left:601.16px;top:411.05px;transform:scaleX(0.8600);">[-] DEBUGGER DETECTED! Nice try.</span>
<span class="t" id="t66" style="left:287.29px;top:436.30px;transform:scaleX(0.9506);">26</span>
<span class="t" id="t67" style="left:314.66px;top:434.90px;transform:scaleX(0.9889);color:#2a8a2a">34f4</span>
<span class="t" id="t68" style="left:409.57px;top:434.90px;transform:scaleX(0.9731);">A</span>
<span class="t" id="t69" style="left:505.49px;top:434.90px;transform:scaleX(0.9506);">52</span>
<span class="t" id="t70" style="left:601.07px;top:434.90px;transform:scaleX(0.9674);">[-] You must patch this check in x64dbg to continue.</span>
<span class="t" id="t71" style="left:287.29px;top:460.15px;transform:scaleX(0.9506);">27</span>
<span class="t" id="t72" style="left:314.75px;top:458.75px;transform:scaleX(0.8651);color:#2a8a2a">352d</span>
<span class="t" id="t73" style="left:409.57px;top:458.75px;transform:scaleX(0.9731);">A</span>
<span class="t" id="t74" style="left:505.49px;top:458.75px;transform:scaleX(0.9506);">30</span>
<span class="t" id="t75" style="left:601.14px;top:458.75px;transform:scaleX(0.8816);">[+] SUCCESS! Key accepted: %s</span>
<span class="t" id="t76" style="left:287.29px;top:484.00px;transform:scaleX(0.9506);">28</span>
<span class="t" id="t77" style="left:314.73px;top:482.60px;transform:scaleX(0.8874);color:#2a8a2a">354c</span>
<span class="t" id="t78" style="left:409.57px;top:482.60px;transform:scaleX(0.9731);">A</span>
<span class="t" id="t79" style="left:505.49px;top:482.60px;transform:scaleX(0.9506);">30</span>
<span class="t" id="t80" style="left:601.07px;top:482.60px;transform:scaleX(0.9677);">[+] Welcom, to the next level.</span>
<span class="t" id="t81" style="left:287.29px;top:507.85px;transform:scaleX(0.9506);">29</span>
<span class="t" id="t82" style="left:314.75px;top:506.45px;transform:scaleX(0.8651);color:#2a8a2a">356d</span>
<span class="t" id="t83" style="left:409.57px;top:506.45px;transform:scaleX(0.9731);">A</span>
<span class="t" id="t84" style="left:505.49px;top:506.45px;transform:scaleX(0.9506);">44</span>
<span class="t" id="t85" style="left:601.10px;top:506.45px;transform:scaleX(0.9361);">[-] WRONG KEY. Analyze the memory at strcmp!</span>
<span class="t" id="t86" style="left:287.29px;top:531.70px;transform:scaleX(0.9506);">30</span>
<span class="t" id="t87" style="left:314.75px;top:530.30px;transform:scaleX(0.8651);color:#2a8a2a">35a0</span>
<span class="t" id="t88" style="left:409.57px;top:530.30px;transform:scaleX(0.9731);">A</span>
<span class="t" id="t89" style="left:505.49px;top:530.30px;transform:scaleX(0.9506);">23</span>
<span class="t" id="t90" style="left:601.07px;top:530.30px;transform:scaleX(0.9712);">Mingw runtime failure:</span>
</div></div></body></html>
